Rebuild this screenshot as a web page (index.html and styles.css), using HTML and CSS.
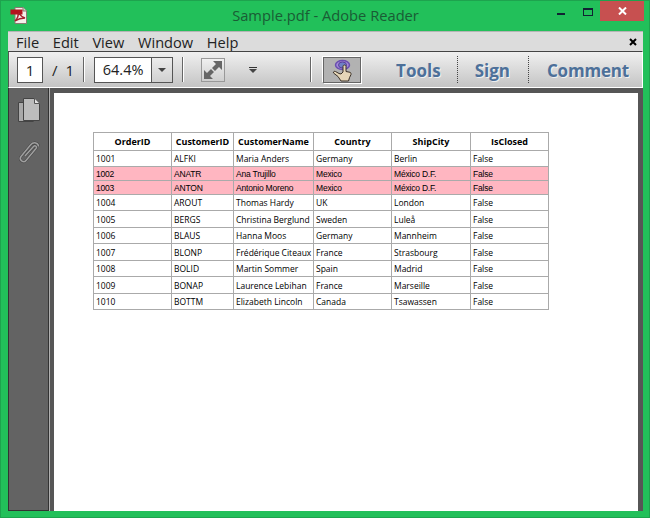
FILE: index.html
```html
<!DOCTYPE html>
<html>
  <head>
    <title>Sample.pdf - Adobe Reader</title>
    <link rel="stylesheet" href="styles.css">
  </head>
  <body>
    <div class="window">
      <div class="titlebar">
        <svg class="app-icon" width="18" height="18" viewBox="0 0 18 18">
          <path d="M5 .5h8l3.500 3.500v12.500h-11.500z" fill="#f4f0ea" stroke="#8a7a72"/>
          <path d="M13 .5v3.500h3.500" fill="#d8d2ca" stroke="#8a7a72"/>
          <rect x="0.500" y="2.500" width="12" height="5" fill="#b3121d"/>
          <path d="M8 6c1 4-1 6-3 8 3-2 7-3 10-3-3-1-5-3-6-5" fill="none" stroke="#a51f2b" stroke-width="1.500"/>
        </svg>
        <div class="title">Sample.pdf - Adobe Reader</div>
        <div class="win-buttons">
          <div class="win-min"></div>
          <div class="win-max"></div>
          <div class="win-close">
            <svg width="9" height="8" viewBox="0 0 9 8"><path d="M1 0.500l7 7M8 0.500l-7 7" stroke="#fff" stroke-width="2"/></svg>
          </div>
        </div>
      </div>

      <div class="menubar">
        <span class="menu-item">File</span>
        <span class="menu-item">Edit</span>
        <span class="menu-item">View</span>
        <span class="menu-item">Window</span>
        <span class="menu-item">Help</span>
        <span class="menu-close">
          <svg width="8" height="8" viewBox="0 0 8 8"><path d="M1 1l6 6M7 1l-6 6" stroke="#000" stroke-width="2"/></svg>
        </span>
      </div>

      <div class="toolbar">
        <div class="page-box">1</div>
        <span class="page-of">/</span>
        <span class="page-total">1</span>
        <div class="tool-sep sep-a"></div>
        <div class="zoom-box">
          <div class="zoom-value">64.4%</div>
          <div class="zoom-arrow"><span class="tri"></span></div>
        </div>
        <div class="tool-sep sep-b"></div>
        <div class="fit-btn">
          <svg width="22" height="22" viewBox="0 0 22 22">
            <path d="M11 2h9v9l-3-3-4 4-3-3 4-4z" fill="#666"/>
            <path d="M2 20v-9l3 3 4-4 3 3-4 4 3 3z" fill="#666"/>
          </svg>
        </div>
        <div class="more"><span class="more-bar"></span><span class="tri"></span></div>
        <div class="tool-sep sep-c"></div>
        <div class="hand-btn">
          <svg width="24" height="24" viewBox="0 0 24 24">
            <ellipse cx="12.500" cy="7" rx="7" ry="4.500" fill="#a48ad8" stroke="#6a4fb0" stroke-width="1.500"/>
            <ellipse cx="12.500" cy="7" rx="4" ry="3" fill="#6f7fc4" stroke="#5b3f9c"/>
            <path d="M13 8.500C13 6.500 16 6.500 16 8.500V13.500L20 14.300C21 14.600 21 15.500 21 16.500L19.500 19.700L18.500 23H11L8 18.500L3.500 15C3 13.500 4.500 13 5.500 13.500L9 15.500L11 16L13 14Z" fill="#e5d6b8" stroke="#3b3128"/>
          </svg>
        </div>
        <div class="nav-links">
          <span class="nav-link nav-tools">Tools</span>
          <span class="nav-dots"></span>
          <span class="nav-link nav-sign">Sign</span>
          <span class="nav-dots"></span>
          <span class="nav-link nav-comment">Comment</span>
        </div>
      </div>

      <div class="main">
        <div class="sidebar">
          <svg class="side-icon" width="22" height="24" viewBox="0 0 22 24">
            <path d="M.5 4.500h15v19h-15z" fill="#a9a9a9" stroke="#444"/>
            <path d="M5.500 .5h11l5 5v17h-16z" fill="#bdbdbd" stroke="#444"/>
            <path d="M16.500 .5v5h5" fill="#e4e4e4" stroke="#555"/>
          </svg>
          <svg class="side-icon" width="22" height="24" viewBox="0 0 22 24">
            <path d="M7 15l8.500-9.500c1.500-1.600 4 0 2.500 2l-10 12c-2.500 3-7.500-.5-5-4l9.500-11.500c3-3.500 8-2.500 8 1.500" fill="none" stroke="#444" stroke-width="2.600"/>
            <path d="M7 15l8.500-9.500c1.500-1.600 4 0 2.500 2l-10 12c-2.500 3-7.500-.5-5-4l9.500-11.500c3-3.500 8-2.500 8 1.500" fill="none" stroke="#a0a0a0" stroke-width="1.500"/>
          </svg>
        </div>
        <div class="viewer">
          <div class="page">
            <table class="orders">
              <thead>
                <tr><th>OrderID</th><th>CustomerID</th><th>CustomerName</th><th>Country</th><th>ShipCity</th><th>IsClosed</th></tr>
              </thead>
              <tbody>
                <tr class="r16"><td>1001</td><td>ALFKI</td><td>Maria Anders</td><td>Germany</td><td>Berlin</td><td>False</td></tr>
                <tr class="open"><td>1002</td><td>ANATR</td><td>Ana Trujillo</td><td>Mexico</td><td>México D.F.</td><td>False</td></tr>
                <tr class="open"><td>1003</td><td>ANTON</td><td>Antonio Moreno</td><td>Mexico</td><td>México D.F.</td><td>False</td></tr>
                <tr class="r16"><td>1004</td><td>AROUT</td><td>Thomas Hardy</td><td>UK</td><td>London</td><td>False</td></tr>
                <tr class="r17"><td>1005</td><td>BERGS</td><td>Christina Berglund</td><td>Sweden</td><td>Luleå</td><td>False</td></tr>
                <tr class="r16"><td>1006</td><td>BLAUS</td><td>Hanna Moos</td><td>Germany</td><td>Mannheim</td><td>False</td></tr>
                <tr class="r17"><td>1007</td><td>BLONP</td><td>Frédérique Citeaux</td><td>France</td><td>Strasbourg</td><td>False</td></tr>
                <tr class="r16"><td>1008</td><td>BOLID</td><td>Martin Sommer</td><td>Spain</td><td>Madrid</td><td>False</td></tr>
                <tr class="r17"><td>1009</td><td>BONAP</td><td>Laurence Lebihan</td><td>France</td><td>Marseille</td><td>False</td></tr>
                <tr class="r16"><td>1010</td><td>BOTTM</td><td>Elizabeth Lincoln</td><td>Canada</td><td>Tsawassen</td><td>False</td></tr>
              </tbody>
            </table>
          </div>
        </div>
      </div>
    </div>
  </body>
</html>
```

FILE: styles.css
```css
html,
body {
  margin: 0;
  padding: 0;
  overflow: hidden;
}
body {
  font-family: "Open Sans", "Noto Sans", sans-serif;
}
.window {
  width: 650px;
  height: 518px;
  box-sizing: border-box;
  background-color: #22c05a;
  border: 1px solid #1ea34e;
  padding: 0 6px 6px 7px;
  display: flex;
  flex-direction: column;
}

/* title bar */
.titlebar {
  height: 30px;
  flex: none;
  display: flex;
  position: relative;
}
.app-icon {
  margin: 6px 0 0 2px;
}
.title {
  position: absolute;
  left: 0;
  right: 0;
  top: 4px;
  text-align: center;
  font-size: 14.7px;
  line-height: 20px;
  color: #1a5c35;
}
.win-buttons {
  margin-left: auto;
  display: flex;
  height: 20px;
}
.win-min {
  width: 8px;
  height: 2px;
  background-color: #123;
  margin: 12px 18px 0 0;
}
.win-max {
  width: 8px;
  height: 5px;
  border: 1px solid #123;
  border-top-width: 2px;
  margin: 7px 7px 0 0;
}
.win-close {
  width: 44px;
  height: 20px;
  background-color: #c75050;
  display: flex;
  align-items: center;
  justify-content: center;
  margin-right: -1px;
}

/* menu */
.menubar {
  height: 19px;
  flex: none;
  background-color: #dcdcdc;
  border-top: 1px solid #b5b5b5;
  display: flex;
  align-items: center;
  padding-left: 8px;
  font-size: 14.6px;
  color: #222;
  gap: 13.7px;
}
.menu-close {
  margin-left: auto;
  margin-right: 6px;
  display: flex;
}

/* toolbar */
.toolbar {
  height: 35px;
  flex: none;
  display: flex;
  align-items: center;
  background: linear-gradient(#f0f0f0, #c4c4c4);
  border: 1px solid #fff;
  border-left-color: #555;
  border-top-color: #444;
  border-bottom-color: #fff;
  font-size: 15px;
  color: #222;
}
.page-box {
  width: 24px;
  height: 24px;
  margin-left: 8px;
  background-color: #fff;
  border: 1px solid #555;
  text-align: center;
  line-height: 24px;
}
.page-of {
  margin-left: 9px;
}
.page-total {
  margin-left: 8px;
}
.tool-sep {
  width: 1px;
  height: 25px;
  background-color: #666;
  border-right: 1px solid #fff;
}
.sep-a {
  margin-left: 9px;
}
.zoom-box {
  display: flex;
  margin-left: 9px;
  height: 24px;
  border: 1px solid #555;
}
.zoom-value {
  width: 56px;
  background-color: #fff;
  border-right: 1px solid #555;
  text-align: center;
  line-height: 24px;
  font-size: 14.5px;
}
.zoom-arrow {
  width: 20px;
  background: linear-gradient(#ececec, #d0d0d0);
  display: flex;
  align-items: center;
  justify-content: center;
}
.tri {
  display: block;
  width: 0;
  height: 0;
  border-left: 4px solid transparent;
  border-right: 4px solid transparent;
  border-top: 4px solid #444;
}
.sep-b {
  margin-left: 9px;
}
.fit-btn {
  width: 22px;
  height: 22px;
  margin-left: 17px;
  border: 1px solid #999;
  background: linear-gradient(#f0f0f0, #cfcfcf);
}
.more {
  margin-left: 24px;
  display: flex;
  flex-direction: column;
  align-items: center;
  gap: 1px;
}
.more-bar {
  width: 8px;
  height: 1px;
  background-color: #333;
}
.sep-c {
  margin-left: 53px;
}
.hand-btn {
  width: 36px;
  height: 24px;
  margin-left: 11px;
  background-color: #b2b2b2;
  border: 1px solid #666;
  box-shadow: 1px 1px 0 #fff, -1px -1px 0 #fff;
  display: flex;
  justify-content: center;
}
.nav-links {
  display: flex;
  align-items: center;
  margin-left: 35px;
  font-size: 17px;
  font-weight: 700;
  color: #4d7099;
  text-shadow: 1px 1px 0 rgba(255, 255, 255, 0.7);
}
.nav-link {
  padding-top: 2px;
}
.nav-sign {
  margin-right: 2px;
}
.nav-comment {
  margin-left: 1px;
  letter-spacing: -0.2px;
}
.nav-dots {
  width: 0;
  height: 27px;
  border-left: 1px dotted #444;
  margin: 0 17px 0 16px;
}

/* document area */
.main {
  flex: 1;
  display: flex;
  min-height: 0;
}
.sidebar {
  width: 40px;
  flex: none;
  box-sizing: border-box;
  background-color: #636363;
  border: 1px solid #333;
  border-top: none;
  border-right: none;
  display: flex;
  flex-direction: column;
  align-items: center;
  padding-top: 10px;
  gap: 19px;
}
.viewer {
  flex: 1;
  min-width: 0;
  background-color: #565656;
  border-left: 1px solid #333;
  box-shadow: inset 1px 0 0 #b0b0b0;
  padding: 5px 5px 0 5px;
  display: flex;
}
.page {
  flex: 1;
  background-color: #fff;
  padding: 39px 0 0 39px;
}

/* table in the pdf */
.orders {
  border-collapse: collapse;
  table-layout: fixed;
  width: 456px;
  font-size: 8.5px;
  color: #000;
}
.orders th,
.orders td {
  border: 1px solid #aaa;
  padding: 0 0 0 2px;
  text-align: left;
  white-space: nowrap;
  overflow: hidden;
}
.orders th {
  height: 17px;
  text-align: center;
  padding: 0;
  font-weight: 700;
  font-size: 9px;
}
.orders th:nth-child(1) { width: 77px; }
.orders th:nth-child(2) { width: 61px; }
.orders th:nth-child(3) { width: 79px; }
.orders th:nth-child(4) { width: 77px; }
.orders th:nth-child(5) { width: 78px; }
.r16 td {
  height: 15px;
}
.r17 td {
  height: 16px;
}
.open td {
  height: 13px;
  background-color: #ffb6c1;
  font-family: "Liberation Sans", sans-serif;
  font-size: 8.5px;
  letter-spacing: -0.2px;
}
```
